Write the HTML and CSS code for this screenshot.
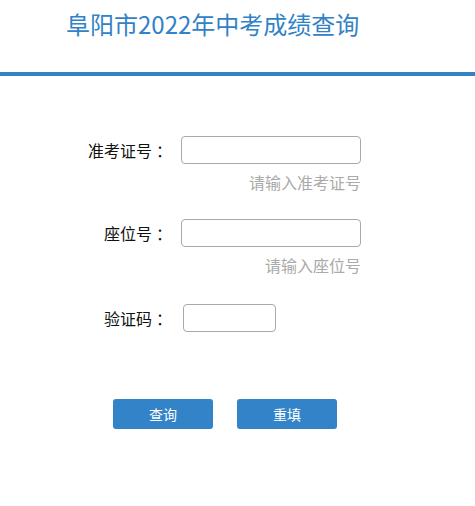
FILE: index.html
```html
<!DOCTYPE html>
<html lang="zh-CN">
<head>
    <meta charset="UTF-8">
    <meta name="viewport" content="width=device-width, initial-scale=1.0">
    <title>阜阳市2022年中考成绩查询</title>
    <link rel="stylesheet" href="styles.css">
</head>
<body>
    <div class="header">
        <h1 class="title">阜阳市2022年中考成绩查询</h1>
    </div>

    <form class="query-form" id="queryForm">
        <div class="field">
            <label class="label" for="zkzh">准考证号<span class="colon">：</span></label>
            <input class="input" type="text" id="zkzh">
        </div>
        <div class="hint">请输入准考证号</div>

        <div class="field field-seat">
            <label class="label" for="zwh">座位号<span class="colon">：</span></label>
            <input class="input" type="text" id="zwh">
        </div>
        <div class="hint">请输入座位号</div>

        <div class="field field-code">
            <label class="label" for="yzm">验证码<span class="colon">：</span></label>
            <input class="input input-code" type="text" id="yzm">
        </div>

        <div class="buttons">
            <button type="button" class="btn">查询</button>
            <button type="reset" class="btn">重填</button>
        </div>
    </form>
</body>
</html>
```

FILE: styles.css
```css
body { margin: 0; font-family: "Microsoft YaHei", "Noto Sans CJK SC", sans-serif; background: #fff; color: #000; }
.header { height: 72px; border-bottom: 4px solid #3282c6; }
.title { margin: 0; padding: 12px 0 0 66px; font-size: 24px; line-height: 24px; font-weight: normal; color: #3282c6; }

.query-form { width: 293px; margin: 60px 0 0 68px; }
.field { display: flex; align-items: center; gap: 13px; }
.label { width: 100px; text-align: right; font-size: 16px; line-height: 28px; color: #111; }
.colon { display: inline-block; width: 16px; text-align: left; text-indent: 4px; }
.input { width: 180px; height: 28px; box-sizing: border-box; border: 1px solid #a9a9a9; border-radius: 4px; padding: 0 6px; font-size: 14px; outline: none; }
.input-code { width: 93px; margin-left: 2px; }
.hint { text-align: right; font-size: 16px; line-height: 16px; color: #aaa; margin-top: 10px; }
.field-seat { margin-top: 29px; }
.field-code { margin-top: 31px; }

.buttons { display: flex; gap: 24px; margin: 67px 0 0 45px; }
.btn { width: 100px; height: 30px; border: none; border-radius: 3px; background: #3283c8; color: #fff; font-family: inherit; font-size: 14px; cursor: pointer; padding: 0; }
```
